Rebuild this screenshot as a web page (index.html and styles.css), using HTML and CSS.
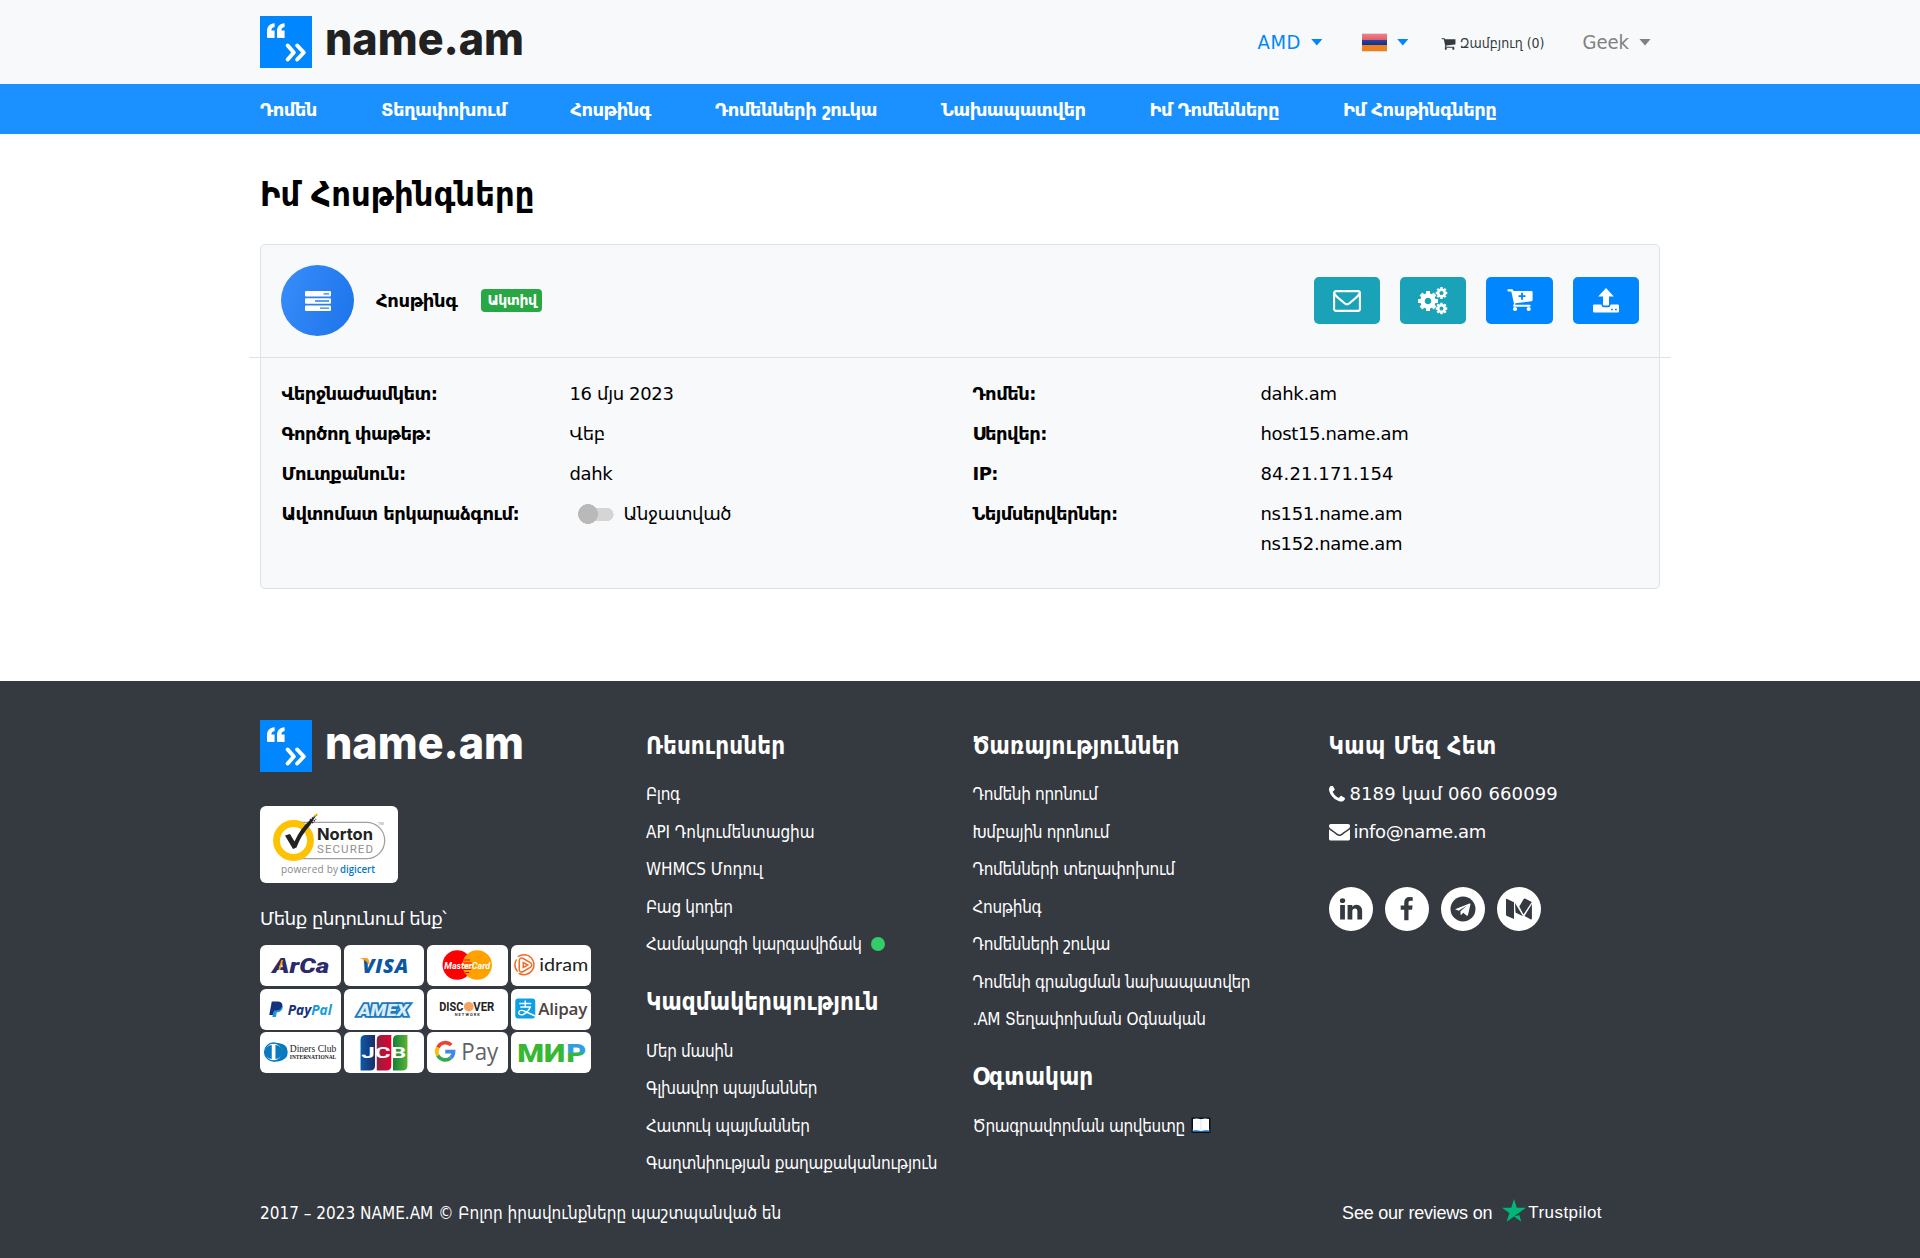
FILE: index.html
```
<!DOCTYPE html>
<html lang="hy">
<head>
<meta charset="utf-8">
<title>Իմ Հոսթինգները</title>
<link rel="stylesheet" href="styles.css">
</head>
<body>
<svg class="defs" width="0" height="0" aria-hidden="true">
  <symbol id="mark" viewBox="0 0 52 52">
    <rect width="52" height="52" fill="#0087ff"/>
    <g fill="#fff"><path id="q" d="M7 21V15.5C7 10.500 9.500 7.500 14.600 7.200V11C12.200 11.400 11.400 12.600 11.400 14.600H14.600V22H8Q7 22 7 21z"/><use href="#q" x="10"/></g>
    <path d="M27.700 29.500L33.800 36.500 27.700 43.500M37.200 29.500L43.800 36.500 37.200 43.500" fill="none" stroke="#fff" stroke-width="4" stroke-linecap="round" stroke-linejoin="round"/>
  </symbol>
  <symbol id="gear" viewBox="-10 -10 20 20">
    <circle r="5.500" fill="none" stroke="currentColor" stroke-width="4.400"/>
    <path d="M0-10V-6M0 10V6M-10 0H-6M10 0H6M-7-7L-5-5M7 7L5 5M-7 7L-5 5M7-7L5-5" stroke="currentColor" stroke-width="4"/>
  </symbol>
</svg>

<header class="top">
  <div class="wrap top-row">
    <a class="logo"><svg class="mark"><use href="#mark"/></svg><svg class="word" width="200" height="52"><text x="-1" y="39" textLength="199" lengthAdjust="spacingAndGlyphs">name.am</text></svg></a>
    <div class="tools">
      <a class="cur">AMD<i class="caret"></i></a>
      <a class="lang"><span class="flag"></span><i class="caret"></i></a>
      <a class="cart"><svg width="15" height="15" viewBox="0 0 1792 1792"><path fill="currentColor" d="M704 1536q0 52-38 90t-90 38-90-38-38-90 38-90 90-38 90 38 38 90zm896 0q0 52-38 90t-90 38-90-38-38-90 38-90 90-38 90 38 38 90zm128-1088v512q0 24-16.500 42.500t-40.500 21.500l-1044 122q13 60 13 70 0 16-24 64h920q26 0 45 19t19 45-19 45-45 19h-1024q-26 0-45-19t-19-45q0-11 8-31.500t16-36 21.500-40 15.500-29.500l-177-823h-204q-26 0-45-19t-19-45 19-45 45-19h256q16 0 28.500 6.500t19.500 15.500 13 24.500 8 26 5.500 29.500 4.500 26h1201q26 0 45 19t19 45z"/></svg>Զամբյուղ (0)</a>
      <a class="user">Geek<i class="caret"></i></a>
    </div>
  </div>
</header>
<nav class="nav"><div class="wrap nav-row">
  <a>Դոմեն</a><a>Տեղափոխում</a><a>Հոսթինգ</a><a>Դոմենների շուկա</a><a>Նախապատվեր</a><a>Իմ Դոմենները</a><a>Իմ Հոսթինգները</a>
</div></nav>

<main class="wrap">
  <h1>Իմ Հոսթինգները</h1>
  <section class="card">
    <div class="card-head">
      <span class="disc"><svg width="26" height="20" viewBox="0 0 26 20"><rect width="26" height="5.600" rx="1" fill="#fff"/><rect y="7.200" width="26" height="5.600" rx="1" fill="#fff"/><rect y="14.400" width="26" height="5.600" rx="1" fill="#fff"/><path d="M18.500 2.900H24M10 10H24M15 17.200H24" stroke="#2a7ff2" stroke-width="1.300"/></svg></span>
      <strong class="plan">Հոսթինգ</strong>
      <span class="badge">Ակտիվ</span>
      <div class="actions">
        <a class="btn teal"><svg width="28" height="22" viewBox="0 0 28 22" fill="none" stroke="#fff" stroke-width="2.100" stroke-linejoin="round"><rect x="1.100" y="1.100" width="25.800" height="19.800" rx="2"/><path d="M1.500 3.500C3 7 8 10 11.500 13.200Q14 15.500 16.500 13.200C20 10 25 7 26.500 3.500"/></svg></a>
        <a class="btn teal"><svg width="30" height="28" viewBox="0 0 30 28"><use href="#gear" x="0" y="4" width="20" height="20"/><use href="#gear" x="17.500" y="0" width="12" height="12"/><use href="#gear" x="17.500" y="15.500" width="12" height="12"/></svg></a>
        <a class="btn blue"><svg width="26" height="23" viewBox="0 0 26 23"><path fill="#fff" d="M1 .3H5Q6.200.3 6.500 2H24.500Q25.600 2 25.600 3V11Q25.600 12 24.500 12.200L8.300 14.200 8.200 15.800H23Q24.300 16.700 23 17.800H7Q5.800 17.500 6.300 16.300L7 14.700 4.300 2.400H1Q-.3 1.300 1 .3z"/><circle cx="8" cy="20" r="2.100" fill="#fff"/><circle cx="21.700" cy="20" r="2.100" fill="#fff"/><path d="M15 3.700V10.700M11.500 7.200H18.500" stroke="#0087ff" stroke-width="1.800"/></svg></a>
        <a class="btn blue"><svg width="26" height="25" viewBox="0 0 26 25"><path fill="#fff" d="M13 0L20.800 8.600H16V16.500Q16 17.500 15 17.500H11Q10 17.500 10 16.500V8.600H5.200zM1.300 16.500H8.300Q8.800 19.300 11 19.300H15Q17.200 19.300 17.700 16.500H24.700Q26 16.500 26 17.800V23.300Q26 24.600 24.700 24.600H1.300Q0 24.600 0 23.300V17.800Q0 16.500 1.300 16.500z"/><path d="M18 21.500H19.800M22 21.500H23.800" stroke="#0087ff" stroke-width="1.600"/></svg></a>
      </div>
    </div>
    <div class="details">
      <dl>
        <dt>Վերջնաժամկետ:</dt><dd>16 մյս 2023</dd>
        <dt>Գործող փաթեթ:</dt><dd>Վեբ</dd>
        <dt>Մուտքանուն:</dt><dd>dahk</dd>
        <dt>Ավտոմատ երկարաձգում:</dt><dd class="renew"><span class="switch"></span>Անջատված</dd>
      </dl>
      <dl>
        <dt>Դոմեն:</dt><dd>dahk.am</dd>
        <dt>Սերվեր:</dt><dd>host15.name.am</dd>
        <dt>IP:</dt><dd class="ip">84.21.171.154</dd>
        <dt>Նեյմսերվերներ:</dt><dd>ns151.name.am<br>ns152.name.am</dd>
      </dl>
    </div>
  </section>
</main>

<footer class="foot">
  <div class="wrap cols">
    <div class="brand">
      <a class="logo light"><svg class="mark"><use href="#mark"/></svg><svg class="word" width="200" height="52"><text x="-1" y="39" textLength="199" lengthAdjust="spacingAndGlyphs">name.am</text></svg></a>
      <svg class="norton" width="138" height="77" viewBox="0 0 138 77">
        <rect width="138" height="77" rx="6" fill="#fff"/>
        <path d="M40 16.300H106.500A18.200 18.200 0 0 1 106.500 52.700H40" fill="none" stroke="#a0a0a0" stroke-width="1.300"/>
        <circle cx="33.500" cy="34.500" r="17" fill="#fff" stroke="#fdc300" stroke-width="6.800"/>
        <path d="M25 29.500L30 28 34.500 35.500Q40 23 50 14L56 9.500 50 19.500Q41 29 36.500 41.500L33 43z" fill="#222"/>
        <path d="M50 14L57 8.500M52 17L56 13" stroke="#222" stroke-width="1.500" stroke-dasharray="1.500 1"/>
        <path d="M54 10L57.500 8" stroke="#fdc300" stroke-width="1.600"/>
        <text x="57" y="33.500" textLength="56" font-family="Inter,sans-serif" font-weight="700" font-size="16.500" fill="#222" lengthAdjust="spacingAndGlyphs">Norton</text>
        <text x="57" y="46.500" textLength="56" font-family="Roboto,sans-serif" font-size="11.500" fill="#8f8f8f">SECURED</text>
        <text x="118" y="19" font-family="Open Sans,sans-serif" font-size="4" fill="#888">TM</text>
        <text x="21" y="67" textLength="57" font-family="Open Sans,sans-serif" font-size="10" fill="#888">powered by</text>
        <text x="80" y="67" textLength="35" font-family="Open Sans,sans-serif" font-weight="600" font-size="10.500" fill="#0079c8" lengthAdjust="spacingAndGlyphs">digicert</text>
      </svg>
      <p class="accept">Մենք ընդունում ենք՝</p>
      <div class="pay">
        <svg viewBox="0 0 80 41"><text x="12" y="27.500" textLength="57" font-weight="900" font-style="italic" font-size="21" fill="#2b2a6c" lengthAdjust="spacingAndGlyphs">ArCa</text><path d="M19 25L22 15" stroke="#f5a800" stroke-width="1.800"/></svg>
        <svg viewBox="0 0 80 41"><text x="18" y="27.500" textLength="46" font-family="Open Sans,sans-serif" font-weight="800" font-style="italic" font-size="20" fill="#0a57a4">VISA</text><path d="M15.500 13H22Q24 13 24.500 15L26 21Q22 15 15.500 13z" fill="#f7a11a"/></svg>
        <svg viewBox="0 0 80 41"><circle cx="30" cy="20" r="14.700" fill="#f00"/><circle cx="50" cy="20" r="14.700" fill="#ffa200"/><path d="M37 15H43M35.500 18H44.500M35.500 21.500H44.500M36 24.500H44M38 27.500H42" stroke="#f00" stroke-width="1"/><text x="17" y="24" textLength="46" font-weight="700" font-style="italic" font-size="9.500" fill="#fff" lengthAdjust="spacingAndGlyphs">MasterCard</text></svg>
        <svg viewBox="0 0 80 41"><g fill="none" stroke="#f26a25" stroke-width="1.500" stroke-linecap="round"><path d="M7 11.500A10 10 0 1 1 8 28.500M5 15A10 10 0 0 0 6 26"/><path d="M8 25V16Q8 12 12 13.500L19 17.500Q22 20 19 22.500L12 26.500Q8.500 28 8 25z"/><path d="M12 22.500V17.500L16.500 20z"/></g><text x="28" y="26" textLength="49" font-family="Lato,sans-serif" font-size="18" fill="#222" lengthAdjust="spacingAndGlyphs">idram</text></svg>
        <svg viewBox="0 0 80 41"><path d="M11.500 12.500H18Q23 13 22 18 21 22 16 22H14L13 26H9z" fill="#14317f"/><path d="M22.300 16Q23.500 23 16.500 23.500L15.700 28H12L13.800 21.500H16Q21 21.500 22.300 16z" fill="#1a9bd7"/><text x="27.500" y="25.500" textLength="44" font-family="Open Sans,sans-serif" font-weight="700" font-style="italic" font-size="13.500" fill="#14317f" lengthAdjust="spacingAndGlyphs">Pay<tspan fill="#1a9bd7">Pal</tspan></text></svg>
        <svg viewBox="0 0 80 41"><text x="14" y="26.500" textLength="50" font-weight="900" font-style="italic" font-size="17" fill="#d9edfb" stroke="#1d79bd" stroke-width="3.600" paint-order="stroke" lengthAdjust="spacingAndGlyphs">AMEX</text></svg>
        <svg viewBox="0 0 80 41"><circle cx="41.500" cy="17.700" r="4.800" fill="#f4a261"/><text x="12" y="22" textLength="24" font-weight="700" font-size="12.500" fill="#222" lengthAdjust="spacingAndGlyphs">DISC</text><text x="46" y="22" textLength="21" font-weight="700" font-size="12.500" fill="#222" lengthAdjust="spacingAndGlyphs">VER</text><text x="27.500" y="27" textLength="25" font-weight="700" font-size="4" fill="#333">NETWORK</text></svg>
        <svg viewBox="0 0 80 41"><rect x="4" y="9.500" width="20" height="20" rx="3" fill="#0d9fe8"/><path d="M8 14.500H20M14 11.500V18M9 18H19Q17 23 12 25.500 7 26.500 7.500 23 9 20 14 22.500L24 27" fill="none" stroke="#fff" stroke-width="1.400"/><text x="27" y="25.500" textLength="49" font-family="Open Sans,sans-serif" font-weight="600" font-size="17" fill="#4a4341">Alipay</text></svg>
        <svg viewBox="0 0 80 41"><path d="M13 11H18Q27.500 12 27.500 20T18 29.500H13z" fill="#0a79bf"/><circle cx="13.300" cy="20" r="9" fill="#fff" stroke="#0a79bf" stroke-width="1.300"/><path d="M11.500 13A7 7 0 0 0 11.500 27zM15.200 13A7 7 0 0 1 15.200 27z" fill="#0a79bf"/><text x="29.500" y="20.300" textLength="46.500" font-family="Liberation Serif,serif" font-size="9.500" fill="#222" lengthAdjust="spacingAndGlyphs">Diners Club</text><text x="29.500" y="26.500" textLength="46.500" font-family="Liberation Serif,serif" font-weight="700" font-size="5.500" fill="#222" lengthAdjust="spacingAndGlyphs">INTERNATIONAL</text></svg>
        <svg viewBox="0 0 80 41"><defs><linearGradient id="jb"><stop stop-color="#0b5ba9"/><stop offset="1" stop-color="#1c2c67"/></linearGradient><linearGradient id="jr"><stop stop-color="#8c2340"/><stop offset="1" stop-color="#e4002f"/></linearGradient><linearGradient id="jg"><stop stop-color="#12803c"/><stop offset="1" stop-color="#5bb533"/></linearGradient></defs><path d="M16.300 8Q16.300 3 21.300 3H30.800V33.500Q30.800 38.500 25.800 38.500H16.300z" fill="url(#jb)"/><path d="M32.500 8Q32.500 3 37.500 3H47V33.500Q47 38.500 42 38.500H32.500z" fill="url(#jr)"/><path d="M48.700 8Q48.700 3 53.700 3H63.200V33.500Q63.200 38.500 58.200 38.500H48.700z" fill="url(#jg)"/><text x="17" y="25.700" textLength="45" font-weight="700" font-size="15" fill="#fff" lengthAdjust="spacingAndGlyphs">JCB</text></svg>
        <svg viewBox="0 0 80 41"><g fill="none" stroke-width="3.700"><path d="M24 13A8.300 8.300 0 0 0 10.600 15.500" stroke="#ea4335"/><path d="M10.600 15.500A8.300 8.300 0 0 0 10.600 23.500" stroke="#fbbc04"/><path d="M10.600 23.500A8.300 8.300 0 0 0 23.500 25.800" stroke="#34a853"/><path d="M23.500 25.800A8.300 8.300 0 0 0 26.300 19.700H18" stroke="#4285f4"/></g><text x="34" y="28" textLength="37" font-family="Open Sans,sans-serif" font-size="24" fill="#5f6368" lengthAdjust="spacingAndGlyphs">Pay</text></svg>
        <svg viewBox="0 0 80 41"><defs><linearGradient id="mir" x2="0" y2="1"><stop offset=".53" stop-color="#2f9fe0"/><stop offset=".53" stop-color="#37b834"/></linearGradient></defs><text x="6" y="29.500" textLength="48" font-weight="900" font-size="26.500" fill="#37b834" lengthAdjust="spacingAndGlyphs">МИ</text><text x="55" y="29.500" textLength="20" font-weight="900" font-size="26.500" fill="url(#mir)" lengthAdjust="spacingAndGlyphs">Р</text></svg>
      </div>
    </div>
    <div>
      <h2>Ռեսուրսներ</h2>
      <ul><li>Բլոգ</li><li class="wide">API Դոկումենտացիա</li><li class="wide">WHMCS Մոդուլ</li><li>Բաց կոդեր</li><li>Համակարգի կարգավիճակ<i class="dot"></i></li></ul>
      <h2>Կազմակերպություն</h2>
      <ul><li>Մեր մասին</li><li>Գլխավոր պայմաններ</li><li>Հատուկ պայմաններ</li><li class="long">Գաղտնիության քաղաքականություն</li></ul>
    </div>
    <div>
      <h2>Ծառայություններ</h2>
      <ul><li>Դոմենի որոնում</li><li>Խմբային որոնում</li><li>Դոմենների տեղափոխում</li><li>Հոսթինգ</li><li>Դոմենների շուկա</li><li>Դոմենի գրանցման նախապատվեր</li><li class="long">.AM Տեղափոխման Օգնական</li></ul>
      <h2>Օգտակար</h2>
      <ul><li>Ծրագրավորման արվեստը<svg class="book" width="20" height="17" viewBox="0 0 20 17"><rect x=".5" y=".5" width="19" height="15.500" rx="1" fill="#0b0e14"/><rect x="1.500" y="12" width="17" height="3" fill="#1768b3"/><path d="M2 2Q6 .8 10 2.300 14 .8 18 2V13.500Q14 12.800 10 14 6 12.800 2 13.500z" fill="#fff"/><path d="M10 2.500V13.500" stroke="#cfd6dd" stroke-width=".6"/></svg></li></ul>
    </div>
    <div class="contact">
      <h2>Կապ Մեզ Հետ</h2>
      <ul>
        <li><svg width="17" height="17" viewBox="192 160 1500 1500"><path fill="#fff" d="M1600 1240q0 27-10 70.500t-21 68.500q-21 50-122 106-94 51-186 51-27 0-53-3.500t-57.500-12.500-47-14.500-55.500-20.500-49-18q-98-35-175-83-127-79-264-216t-216-264q-48-77-83-175-3-9-18-49t-20.500-55.500-14.500-47-12.500-57.500-3.500-53q0-92 51-186 56-101 106-122 25-11 68.500-21t70.500-10q14 0 21 3 18 6 53 76 11 19 30 54t35 63.500 31 53.500q3 4 17.500 25t21.500 35.500 7 28.500q0 20-28.500 50t-62 55-62 53-28.500 46q0 9 5 22.500t8.500 20.500 14 24 11.500 19q76 137 174 235t235 174q2 1 19 11.500t24 14 20.500 8.500 22.500 5q18 0 46-28.500t53-62 55-62 50-28.500q14 0 28.500 7t35.500 21.500 25 17.500q25 15 53.500 31t63.500 35 54 30q70 35 76 53 3 7 3 21z"/></svg>8189 կամ 060 660099</li>
        <li class="mail"><svg width="21" height="21" viewBox="0 0 1792 1792"><path fill="#fff" d="M1792 710v794q0 66-47 113t-113 47h-1472q-66 0-113-47t-47-113v-794q44 49 101 87 362 246 497 345 57 42 92.500 65.500t94.500 48 110 24.500h2q51 0 110-24.500t94.500-48 92.500-65.500q170-123 498-345 57-39 100-87zm0-294q0 79-49 151t-122 123q-376 261-468 325-10 7-42.500 31t-54 38.500-52 32.500-57.500 27-50 9h-2q-23 0-50-9t-57.500-27-52-32.500-54-38.500-42.500-31q-91-64-262-182.500t-205-142.500q-62-42-117-115.500t-55-136.500q0-78 41.500-130t118.500-52h1472q65 0 112.500 47t47.500 113z"/></svg>info@name.am</li>
      </ul>
      <div class="social">
        <a><svg width="26" height="26" viewBox="0 0 1792 1792"><path d="M477 625v991h-330v-991h330zm21-306q1 73-50.500 122t-135.500 49h-2q-82 0-132-49t-50-122q0-74 51.500-122.500t134.500-48.500 133 48.500 51 122.500zm1166 729v568h-329v-530q0-105-40.500-164.500t-126.500-59.500q-63 0-105.500 34.500t-63.500 85.500q-11 30-11 81v553h-329q2-399 2-647t-1-296l-1-48h329v144h-2q20-32 41-56t56.500-52 87-43.500 114.500-15.500q171 0 275 113.500t104 332.500z"/></svg></a>
        <a><svg width="25" height="25" viewBox="0 0 1792 1792"><path d="M1343 12v264h-157q-86 0-116 36t-30 108v189h293l-39 296h-254v759h-306v-759h-255v-296h255v-218q0-186 104-288.500t277-102.500q147 0 228 12z"/></svg></a>
        <a><svg width="26" height="26" viewBox="0 0 26 26"><circle cx="13" cy="13" r="12.500"/><path d="M5 13.200L19.500 7.500Q20.700 7.200 20.400 8.600L18 19Q17.600 20 16.600 19.400L13.200 16.800 11.400 18.800 10.600 19 10.500 15.300 17 9.600 8.800 14.700z" fill="#fff"/></svg></a>
        <a><svg width="26" height="22" viewBox="0 0 26 22"><path d="M0 1.500Q0 .5 1 1L8 4.300V21L1 18Q0 17.500 0 16.500zM9 5L17 18.300 9.500 14.500zM13.300 8.500L17.700 1Q18.200.2 19 .6L25.800 4 17.500 16.500zM25.900 6V20.500Q25.900 22 24.500 21.300L18.500 18z"/></svg></a>
      </div>
    </div>
  </div>
  <div class="wrap base">
    <span>2017 – 2023 NAME.AM © Բոլոր իրավունքները պաշտպանված են</span>
    <a class="trust"><span>See our reviews on</span><svg width="24" height="23" viewBox="0 0 24 23"><path d="M12 0L14.800 8.700H24L16.600 14 19.400 22.700 12 17.400 4.600 22.700 7.400 14 0 8.700H9.200z" fill="#00b67a"/><path d="M17.200 16L16.600 14 12 17.400z" fill="#005128"/></svg><b>Trustpilot</b></a>
  </div>
</footer>
</body>
</html>
```
FILE: styles.css
```
* { box-sizing: border-box; }
body { margin: 0; font: 18px/30px "DejaVu Sans Condensed", "DejaVu Sans", sans-serif; color: #000; background: #fff; }
h1, h2, p, ul, dl, dd { margin: 0; padding: 0; }
ul { list-style: none; }
svg { display: block; flex: none; }
.defs { display: none; }
.wrap { width: 1400px; margin: 0 auto; }

.top { height: 84px; background: #f8f9fb; }
.top-row { height: 84px; display: flex; align-items: center; justify-content: space-between; }
.logo { display: flex; gap: 14px; }
.mark { width: 52px; height: 52px; }
.word { overflow: visible; font: 800 46px Inter, sans-serif; fill: #212121; }
.light .word { fill: #fff; }
.tools { display: flex; align-items: center; padding-right: 9px; font-size: 20px; white-space: nowrap; }
.tools a { display: flex; align-items: center; }
.caret { width: 12px; height: 7px; background: currentColor; clip-path: polygon(0 0, 100% 0, 50% 100%); }
.cur, .lang { color: #0087ff; }
.cur { gap: 10px; letter-spacing: .5px; margin-right: 39px; }
.lang { gap: 10px; margin-right: 32px; }
.flag { width: 25px; height: 19px; border-block: 1px solid #d9dadd; background: linear-gradient(#ee8088 0, #e25d6b 33%, #33479b 33%, #0a2f8f 66%, #f08019 66%); }
.cart { gap: 4px; margin-right: 38px; padding-top: 2px; font-size: 14px; color: #343a40; }
.user { gap: 10px; color: #818181; }

.nav { height: 50px; background: #1a91ff; }
.nav-row { display: flex; gap: 64px; padding-top: 11px; font-family: "DejaVu Sans", sans-serif; font-weight: 700; letter-spacing: -.5px; color: #fff; white-space: nowrap; }

h1 { margin: 39px 0 29px; font-size: 34px; line-height: 42px; letter-spacing: .15px; }
.card { height: 345px; border: 1px solid #dee2e6; border-radius: 5px; background: #f8f9fb; font-family: "DejaVu Sans", sans-serif; }
.card-head { height: 112px; padding: 0 20px 1px; display: flex; align-items: center; }
.disc { width: 73px; height: 71px; border-radius: 50%; background: linear-gradient(110deg, #3a8dfa, #1b74ea); display: grid; place-items: center; }
.plan { margin-left: 22px; letter-spacing: -.4px; }
.badge { width: 61px; height: 23px; margin-left: 24px; border-radius: 4px; background: #28a745; color: #fff; font-size: 14px; font-weight: 700; line-height: 23px; letter-spacing: -.5px; text-align: center; }
.actions { margin-left: auto; display: flex; gap: 20px; }
.btn { width: 66.300px; height: 47px; border-radius: 5px; display: grid; place-items: center; color: #fff; }
.teal { background: #19a2b8; }
.blue { background: #0087ff; }
.details { margin: 0 -12px; padding: 21px 32.500px 0; border-top: 1px solid #dee2e6; display: grid; grid-template-columns: 691px 1fr; }
.details dl { display: grid; grid-template-columns: 288px 1fr; row-gap: 10px; align-content: start; }
dt { font-weight: 700; letter-spacing: -.55px; }
dd { letter-spacing: -.35px; }
.ip { letter-spacing: .1px; }
.renew { display: flex; align-items: center; }
.switch { width: 36px; height: 20px; margin: 0 10px 0 8px; background: radial-gradient(circle at 10px 10px, #b9b9b9 9.600px, transparent 10.200px), linear-gradient(#d5d5d5, #d5d5d5) 10px 4px / 20px 13px no-repeat, radial-gradient(circle at 29px 10.500px, #d5d5d5 6.300px, transparent 6.800px); }

.foot { height: 577px; margin-top: 92px; padding-top: 39px; background: #353940; color: #fff; display: flex; flex-direction: column; }
.cols { height: 478px; display: grid; grid-template-columns: 386px 326.500px 356px 331.500px; white-space: nowrap; }
.norton { margin: 34px 0 21px; }
.accept { font-family: "DejaVu Sans", sans-serif; letter-spacing: -.45px; }
.pay { width: 331px; margin-top: 11px; display: grid; grid-template-columns: repeat(4, 1fr); gap: 2.600px 3px; font-family: Roboto, sans-serif; }
.pay svg { width: 100%; height: 41px; border-radius: 6px; background: #fff; }
h2 { margin: 11px 0 14.400px; font-size: 24px; line-height: 30px; letter-spacing: .1px; }
ul + h2 { margin-top: 24.600px; }
li { display: flex; align-items: center; height: 37.500px; font-size: 17px; letter-spacing: -.33px; }
.long { letter-spacing: -.22px; }
.wide { letter-spacing: -.05px; }
.dot { width: 14px; height: 14px; margin-left: 9px; border-radius: 50%; background: #33cc66; }
.book { margin-left: 6px; }
.contact li { gap: 4px; font-family: "DejaVu Sans", sans-serif; font-size: 18px; letter-spacing: .1px; }
.contact .mail { letter-spacing: -.4px; }
.contact h2 { letter-spacing: .4px; }
.social { display: flex; gap: 12px; margin-top: 37px; }
.social a { width: 44px; height: 44px; border-radius: 50%; background: #fff; display: grid; place-items: center; }
.social svg { fill: #353940; }
.base { display: flex; justify-content: space-between; font-size: 17px; }
.trust { display: flex; align-items: center; margin-right: 58px; font: 18px/30px "Liberation Sans", sans-serif; }
.trust span { letter-spacing: -.22px; }
.trust svg { margin: -6px 2px 0 10px; }
.trust b { font-size: 17px; font-weight: 400; letter-spacing: .45px; }
```
